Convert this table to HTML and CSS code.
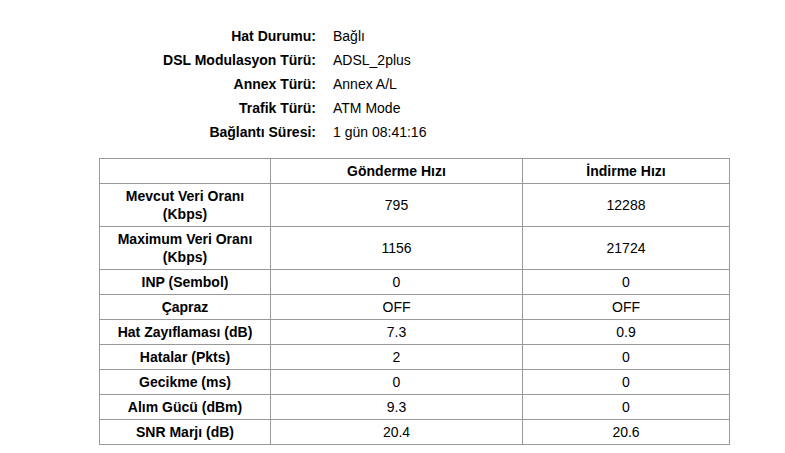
FILE: index.html
```html
<!DOCTYPE html>
<html lang="tr">
<head>
<meta charset="utf-8">
<title>DSL Durumu</title>
<link rel="stylesheet" href="styles.css">
</head>
<body>
<div class="page">
  <div class="info">
    <div class="label">Hat Durumu:</div><div class="value">Bağlı</div>
    <div class="label">DSL Modulasyon Türü:</div><div class="value">ADSL_2plus</div>
    <div class="label">Annex Türü:</div><div class="value">Annex A/L</div>
    <div class="label">Trafik Türü:</div><div class="value">ATM Mode</div>
    <div class="label">Bağlantı Süresi:</div><div class="value">1 gün 08:41:16</div>
  </div>
  <table class="stats">
    <colgroup>
      <col class="c1"><col class="c2"><col class="c3">
    </colgroup>
    <tr class="head"><th></th><th>Gönderme Hızı</th><th>İndirme Hızı</th></tr>
    <tr><th>Mevcut Veri Oranı<br>(Kbps)</th><td>795</td><td>12288</td></tr>
    <tr><th>Maximum Veri Oranı<br>(Kbps)</th><td>1156</td><td>21724</td></tr>
    <tr><th>INP (Sembol)</th><td>0</td><td>0</td></tr>
    <tr><th>Çapraz</th><td>OFF</td><td>OFF</td></tr>
    <tr><th>Hat Zayıflaması (dB)</th><td>7.3</td><td>0.9</td></tr>
    <tr><th>Hatalar (Pkts)</th><td>2</td><td>0</td></tr>
    <tr><th>Gecikme (ms)</th><td>0</td><td>0</td></tr>
    <tr><th>Alım Gücü (dBm)</th><td>9.3</td><td>0</td></tr>
    <tr><th>SNR Marjı (dB)</th><td>20.4</td><td>20.6</td></tr>
  </table>
</div>
</body>
</html>
```
FILE: styles.css
```css
html, body {
  margin: 0;
  padding: 0;
  background: #fff;
}
body {
  font-family: "Liberation Sans", Arial, sans-serif;
  font-size: 14px;
  color: #000;
}
.page {
  padding-top: 24px;
}
.info {
  display: grid;
  grid-template-columns: 316px auto;
  column-gap: 17px;
  grid-auto-rows: 24px;
  align-items: center;
}
.label {
  font-weight: bold;
  text-align: right;
}
.stats {
  margin: 14px 0 0 99px;
  border-collapse: collapse;
  table-layout: fixed;
  width: 631px;
}
.c1 { width: 171px; }
.c2 { width: 252px; }
.c3 { width: 207px; }
.stats th,
.stats td {
  border: 1px solid #999;
  padding: 3px 4px;
  line-height: 18px;
  text-align: center;
  vertical-align: middle;
}
.stats th {
  font-weight: bold;
}
.stats td {
  font-weight: normal;
}
```
